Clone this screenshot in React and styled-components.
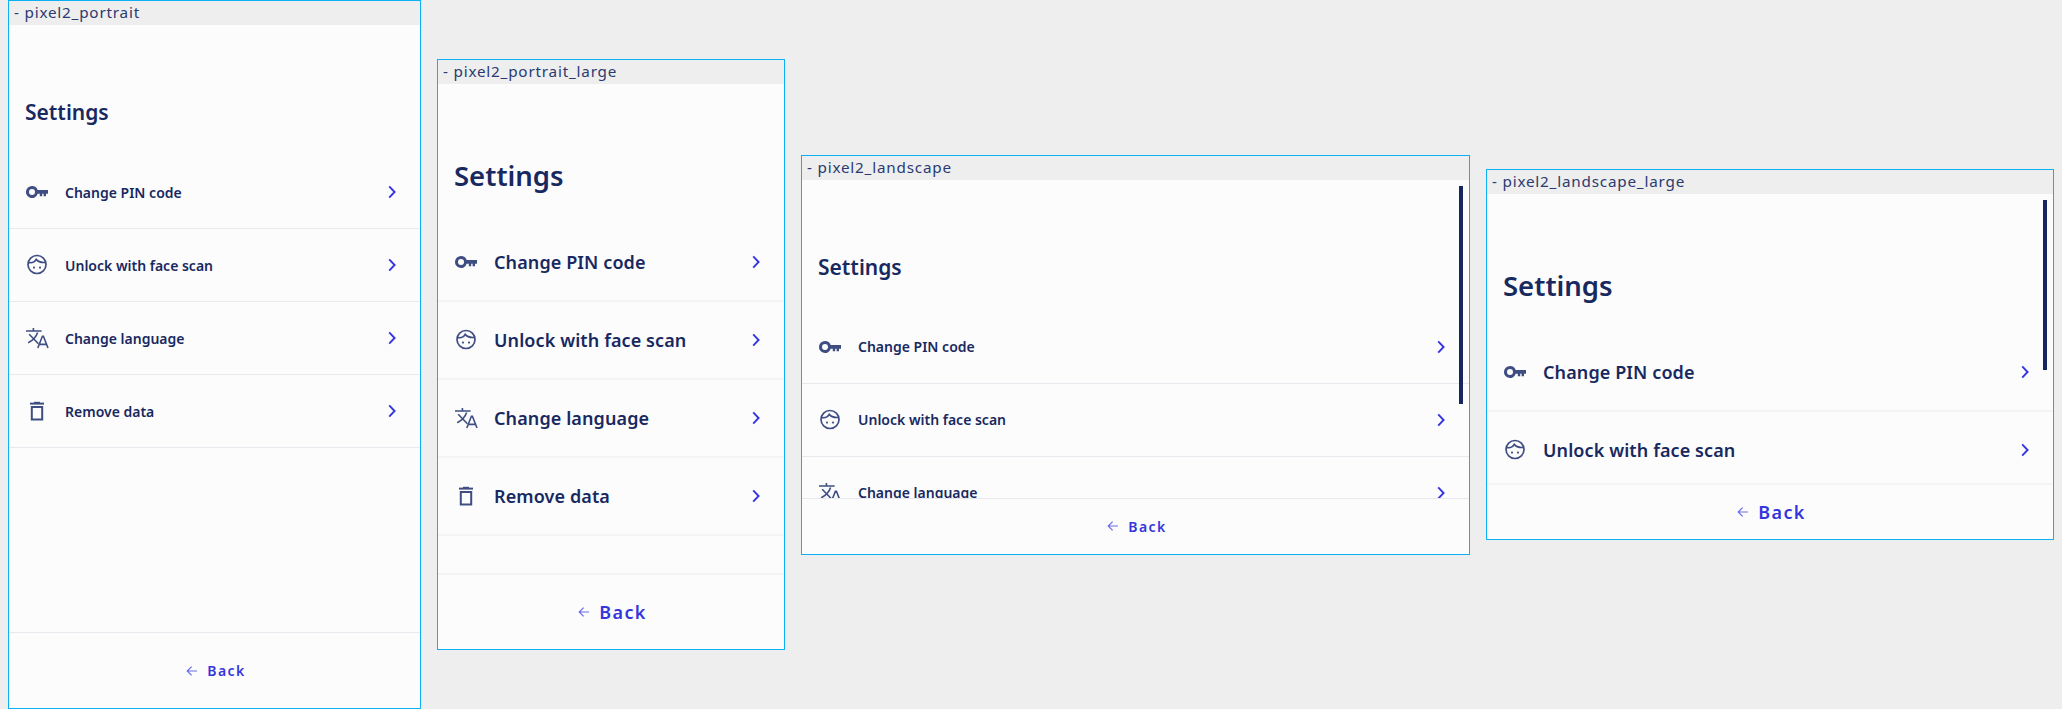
import styled, { createGlobalStyle } from "styled-components";

const GlobalStyle = createGlobalStyle`
  * { box-sizing: border-box; }
  html, body { margin: 0; height: 100%; background: #eeeeee; overflow: hidden; }
  body { padding: 0 8px; font-family: "Noto Sans", "Open Sans", sans-serif; }
`;

const Gallery = styled.div`
  display: flex;
  align-items: center;
  gap: 16px;
  height: 709px;
`;

const Device = styled.section`
  position: relative;
  display: flex;
  flex-direction: column;
  flex: none;
  width: ${(p) => p.$w}px;
  height: ${(p) => p.$h}px;
  border: 1px solid #0cb0f5;
  background: #fcfcfd;
`;

const DeviceName = styled.div`
  flex: none;
  height: 24px;
  padding-left: 5px;
  background: #eeeeee;
  color: #2a3a70;
  font-size: 15.25px;
  line-height: 23px;
  letter-spacing: 0.8px;
  white-space: nowrap;
  overflow: hidden;
`;

const Scroller = styled.div`
  flex: 1;
  min-height: 0;
  overflow: hidden;
`;

const ScrollThumb = styled.div`
  position: absolute;
  top: 30px;
  right: 6px;
  width: 4px;
  height: ${(p) => p.$h}px;
  background: #16265f;
`;

const Title = styled.h1`
  display: flex;
  align-items: center;
  margin: 0;
  padding: ${(p) => (p.$large ? 42 : 43)}px 0 0 16px;
  height: ${(p) => (p.$large ? 140 : 131)}px;
  color: #18295f;
  font-size: ${(p) => (p.$large ? 27.5 : 21)}px;
  font-weight: 600;
`;

const Row = styled.div`
  display: flex;
  align-items: center;
  gap: 16px;
  height: ${(p) => (p.$large ? 78 : 73)}px;
  padding: 0 16px;
  border-bottom: ${(p) => (p.$large ? "2px solid #f4f4f6" : "1px solid #e8e8ee")};
  color: #3f4e82;
`;

const Label = styled.span`
  flex: 1;
  color: #18295f;
  font-size: ${(p) => (p.$large ? 18 : 14)}px;
  font-weight: 600;
  letter-spacing: ${(p) => (p.$large ? 0.1 : 0)}px;
`;

const Footer = styled.div`
  flex: none;
  display: flex;
  align-items: center;
  justify-content: center;
  gap: 9px;
  height: ${(p) => p.$h}px;
  padding-left: 3px;
  border-top: ${(p) => (p.$large ? "2px solid #f4f4f6" : "1px solid #e8e8ee")};
  color: #3535dc;
`;

const BackText = styled.span`
  font-size: ${(p) => (p.$large ? 18 : 14)}px;
  font-weight: 600;
  letter-spacing: 1.4px;
`;

const KeyIcon = () => (
  <svg width="24" height="24" viewBox="0 0 24 24" fill="currentColor">
    <path
      fillRule="evenodd"
      d="M7 6a6 6 0 0 1 5.7 4H23v3.8h-2v2.4h-2.4v-2.4h-1.4v2.4h-2.4v-2.4h-2.1A6 6 0 1 1 7 6zm0 3a3 3 0 1 0 0 6 3 3 0 0 0 0-6z"
    />
  </svg>
);

const FaceIcon = () => (
  <svg width="24" height="24" viewBox="0 0 24 24" fill="none" stroke="currentColor" strokeWidth="1.7">
    <circle cx="12" cy="11.5" r="9" />
    <path d="M3.8 9.6c3.2.5 6-.6 7.4-3.2 1.8 2.2 5 3.4 9 3" />
    <circle cx="9" cy="14.6" r="1.05" fill="currentColor" stroke="none" />
    <circle cx="15" cy="14.6" r="1.05" fill="currentColor" stroke="none" />
  </svg>
);

const TranslateIcon = () => (
  <svg width="24" height="24" viewBox="0 0 24 24" fill="none" stroke="currentColor" strokeWidth="1.6">
    <path d="M1 5h15.6M8.4 2v3M4.2 8.2l9.2 9.6M12.6 6.6c-1.4 4.4-4.6 7.8-9.4 10.2" />
    <path d="M12.8 22l4.6-11.8h1L23 22M14.4 18.4h7" />
  </svg>
);

const TrashIcon = () => (
  <svg width="24" height="24" viewBox="0 0 24 24" fill="none" stroke="currentColor" strokeWidth="2">
    <path d="M5 4.6h14" />
    <path d="M9 3.4h6" strokeWidth="1.2" />
    <path d="M6.8 8h10.4v12.4H6.8z" />
  </svg>
);

const Chevron = () => (
  <svg width="24" height="24" viewBox="0 0 24 24" fill="none" stroke="#3535e0" strokeWidth="1.9">
    <path d="M9.2 6.4l5.4 5.6-5.4 5.6" />
  </svg>
);

const ArrowLeft = () => (
  <svg width="12" height="12" viewBox="0 0 12 12" fill="none" stroke="#6c6cec" strokeWidth="1.2">
    <path d="M11 6H1.4M5.6 1.6L1.2 6l4.4 4.4" />
  </svg>
);

const items = [
  { label: "Change PIN code", Icon: KeyIcon },
  { label: "Unlock with face scan", Icon: FaceIcon },
  { label: "Change language", Icon: TranslateIcon },
  { label: "Remove data", Icon: TrashIcon },
];

const devices = [
  { name: "pixel2_portrait", w: 413, h: 709, footer: 76 },
  { name: "pixel2_portrait_large", w: 348, h: 591, footer: 76, large: true },
  { name: "pixel2_landscape", w: 669, h: 400, footer: 56, thumb: 218 },
  { name: "pixel2_landscape_large", w: 568, h: 371, footer: 56, large: true, thumb: 170 },
];

function App() {
  return (
    <>
      <GlobalStyle />
      <Gallery>
        {devices.map((d) => (
          <Device key={d.name} $w={d.w} $h={d.h}>
            <DeviceName>- {d.name}</DeviceName>
            <Scroller>
              <Title $large={d.large}>Settings</Title>
              {items.map(({ label, Icon }) => (
                <Row key={label} $large={d.large}>
                  <Icon />
                  <Label $large={d.large}>{label}</Label>
                  <Chevron />
                </Row>
              ))}
            </Scroller>
            <Footer $h={d.footer} $large={d.large}>
              <ArrowLeft />
              <BackText $large={d.large}>Back</BackText>
            </Footer>
            {d.thumb && <ScrollThumb $h={d.thumb} />}
          </Device>
        ))}
      </Gallery>
    </>
  );
}

export default App;
